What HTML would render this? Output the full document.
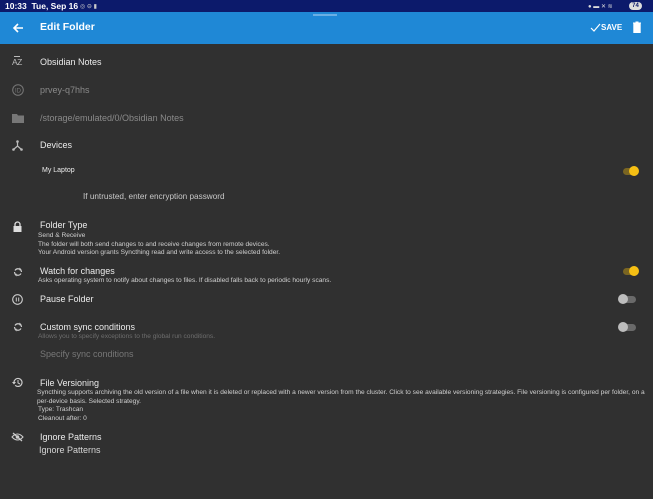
<!DOCTYPE html>
<html><head><meta charset="utf-8"><style>
*{margin:0;padding:0;box-sizing:border-box}
body{width:653px;height:499px;background:#303030;font-family:"Liberation Sans",sans-serif;color:#e8e8e8;position:relative;overflow:hidden}
.a{position:absolute;white-space:nowrap}
.t{font-size:9px;color:#ececec}
.s{font-size:6.6px;color:#d0d0d0;line-height:8.5px}
.g{color:#8a8a8a}
svg.i{position:absolute}
.tog{position:absolute;width:14px;height:7px;border-radius:4px}
.th{position:absolute;width:10px;height:10px;border-radius:50%}
</style></head><body>
<div class="a" style="left:0;top:0;width:653px;height:12px;background:#0c1a6b"></div>
<div class="a" style="left:5px;top:1px;font-size:8.5px;font-weight:bold;color:#fff">10:33&nbsp; Tue, Sep 16</div>
<div class="a" style="left:80px;top:3px;width:26px;height:6px;color:#ccc;font-size:6px">◎ ⊖ ▮</div>
<div class="a" style="left:588px;top:3px;width:40px;height:6px;color:#ddd;font-size:6px">● ▬ ✕ ≋</div>
<div class="a" style="left:629px;top:2px;width:13px;height:8px;border-radius:4px;background:#ddd;color:#0c1a6b;font-size:6px;text-align:center;font-weight:bold;line-height:8px">74</div>
<div class="a" style="left:0;top:12px;width:653px;height:32px;background:#1f88d6"></div>
<div class="a" style="left:313px;top:14px;width:24px;height:2px;background:#6aaee4"></div>
<svg class="i" style="left:12px;top:22px" width="12" height="12" viewBox="0 0 12 12"><path d="M11 6H2M6 2L2 6l4 4" stroke="#fff" stroke-width="1.6" fill="none"/></svg>
<div class="a" style="left:40px;top:21px;font-size:10.5px;font-weight:bold;color:#fff">Edit Folder</div>
<svg class="i" style="left:590px;top:23px" width="11" height="9" viewBox="0 0 11 9"><path d="M1 5l3 3 6-7" stroke="#fff" stroke-width="1.2" fill="none"/></svg>
<div class="a" style="left:601px;top:23px;font-size:8px;font-weight:bold;color:#fff">SAVE</div>
<svg class="i" style="left:632px;top:21px" width="10" height="12" viewBox="0 0 10 12"><path d="M1 2h8M3.5 1h3M1.8 3h6.4v8.5H1.8z" stroke="#fff" fill="#fff"/></svg>

<div class="a" style="left:12px;top:57px;font-size:8.5px;color:#bbb;letter-spacing:-0.5px">AZ</div>
<div class="a" style="left:14px;top:56px;width:6px;height:1px;background:#bbb"></div>
<div class="a t" style="left:40px;top:57px">Obsidian Notes</div>
<svg class="i" style="left:12px;top:84px" width="12" height="12"><circle cx="6" cy="6" r="5.3" stroke="#777" fill="none"/><text x="3" y="8.5" font-size="6" fill="#777" font-family="Liberation Sans">ID</text></svg>
<div class="a t g" style="left:40px;top:85px">prvey-q7hhs</div>
<svg class="i" style="left:12px;top:113px" width="12" height="10"><path d="M0 1h5l1 1.5h6V10H0z" fill="#777"/></svg>
<div class="a t g" style="left:40px;top:113px">/storage/emulated/0/Obsidian Notes</div>
<svg class="i" style="left:12px;top:140px" width="11" height="11"><path d="M5.5 1v5M5.5 6L1.5 9.5M5.5 6l4 3.5" stroke="#bbb" stroke-width="1.2"/><circle cx="5.5" cy="1.5" r="1.3" fill="#bbb"/><circle cx="1.5" cy="9.5" r="1.3" fill="#bbb"/><circle cx="9.5" cy="9.5" r="1.3" fill="#bbb"/></svg>
<div class="a t" style="left:40px;top:140px">Devices</div>
<div class="a" style="left:42px;top:167px;font-size:7px;color:#eee">My Laptop</div>
<div class="tog" style="left:623px;top:168px;background:#7a6522"></div><div class="th" style="left:629px;top:166px;background:#f5bf14"></div>
<div class="a" style="left:83px;top:192px;font-size:8.2px;color:#c8c8c8">If untrusted, enter encryption password</div>

<svg class="i" style="left:13px;top:221px" width="9" height="11"><path d="M2 5V3.5a2.5 2.5 0 015 0V5" stroke="#ddd" fill="none" stroke-width="1.3"/><rect x="0.5" y="5" width="8" height="6" fill="#ddd"/></svg>
<div class="a t" style="left:40px;top:220px">Folder Type</div>
<div class="a s" style="left:38px;top:232px">Send &amp; Receive<br>The folder will both send changes to and receive changes from remote devices.<br>Your Android version grants Syncthing read and write access to the selected folder.</div>

<svg class="i" style="left:13px;top:267px" width="10" height="10" viewBox="0 0 10 10"><path d="M2 3.5A3.5 3.5 0 018.5 5M8 6.5A3.5 3.5 0 011.5 5" stroke="#ccc" stroke-width="1.2" fill="none"/><path d="M6.5 0.5l2 2-2 1z" fill="#ccc"/><path d="M3.5 9.5l-2-2 2-1z" fill="#ccc"/></svg>
<div class="a t" style="left:40px;top:266px">Watch for changes</div>
<div class="a s" style="left:38px;top:277px">Asks operating system to notify about changes to files. If disabled falls back to periodic hourly scans.</div>
<div class="tog" style="left:623px;top:268px;background:#7a6522"></div><div class="th" style="left:629px;top:266px;background:#f5bf14"></div>

<svg class="i" style="left:12px;top:294px" width="11" height="11"><circle cx="5.5" cy="5.5" r="4.8" stroke="#ccc" fill="none" stroke-width="1.1"/><path d="M4.3 3.5v4M6.7 3.5v4" stroke="#ccc"/></svg>
<div class="a t" style="left:40px;top:294px">Pause Folder</div>
<div class="tog" style="left:622px;top:296px;background:#6a6a6a"></div><div class="th" style="left:618px;top:294px;background:#bdbdbd"></div>

<svg class="i" style="left:13px;top:322px" width="10" height="10" viewBox="0 0 10 10"><path d="M2 3.5A3.5 3.5 0 018.5 5M8 6.5A3.5 3.5 0 011.5 5" stroke="#ccc" stroke-width="1.2" fill="none"/><path d="M6.5 0.5l2 2-2 1z" fill="#ccc"/><path d="M3.5 9.5l-2-2 2-1z" fill="#ccc"/></svg>
<div class="a t" style="left:40px;top:322px">Custom sync conditions</div>
<div class="a s" style="left:38px;top:333px;color:#6e6e6e">Allows you to specify exceptions to the global run conditions.</div>
<div class="tog" style="left:622px;top:324px;background:#6a6a6a"></div><div class="th" style="left:618px;top:322px;background:#bdbdbd"></div>
<div class="a t" style="left:40px;top:349px;color:#777">Specify sync conditions</div>

<svg class="i" style="left:12px;top:377px" width="11" height="11" viewBox="0 0 11 11"><path d="M2 5.5a4 4 0 111.2 2.8" stroke="#ccc" stroke-width="1.2" fill="none"/><path d="M0 5h4L2 7.5z" fill="#ccc"/><path d="M6 3v3l2 1" stroke="#ccc" fill="none"/></svg>
<div class="a t" style="left:40px;top:378px">File Versioning</div>
<div class="a s" style="left:37px;top:389px">Syncthing supports archiving the old version of a file when it is deleted or replaced with a newer version from the cluster. Click to see available versioning strategies. File versioning is configured per folder, on a<br>per-device basis. Selected strategy.</div>
<div class="a s" style="left:38px;top:406px">Type: Trashcan</div>
<div class="a s" style="left:38px;top:415px">Cleanout after: 0</div>

<svg class="i" style="left:11px;top:432px" width="13" height="10" viewBox="0 0 13 10"><path d="M1 5Q6.5-1 12 5Q6.5 11 1 5z" stroke="#ccc" fill="none" stroke-width="1.1"/><circle cx="6.5" cy="5" r="1.8" fill="#ccc"/><path d="M2 1l9 8" stroke="#ccc" stroke-width="1.2"/></svg>
<div class="a t" style="left:40px;top:432px">Ignore Patterns</div>
<div class="a t" style="left:39px;top:445px;color:#d6d6d6">Ignore Patterns</div>
</body></html>
